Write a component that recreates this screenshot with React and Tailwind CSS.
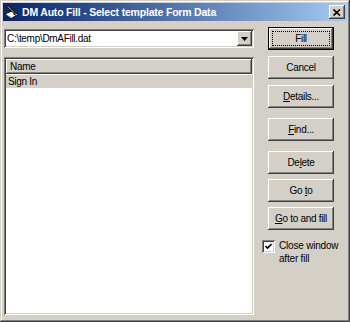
import React from 'react'

// Win2000-style dialog: "DM Auto Fill - Select template Form Data"

const raised =
  'bg-[#d4d0c8] shadow-[inset_-1px_-1px_#404040,inset_1px_1px_#ffffff,inset_-2px_-2px_#808080,inset_2px_2px_#d4d0c8]'
const sunken =
  'shadow-[inset_1px_1px_#808080,inset_-1px_-1px_#ffffff,inset_2px_2px_#404040,inset_-2px_-2px_#d4d0c8]'

const Btn = ({ children, className = '' }) => (
  <div
    className={`h-[23px] w-[66px] flex items-center justify-center text-[10px] tracking-[-0.3px] text-black ${raised} ${className}`}
  >
    {children}
  </div>
)

const TitleIcon = () => (
  <svg width="16" height="16" viewBox="0 0 16 16" className="shrink-0">
    <path d="M1 10 L8 7 L14 10.5 L7 14.5 Z" fill="#ffffff" stroke="#000" strokeWidth="0.8" />
    <path d="M2.5 11 L7 13.5" stroke="#808080" strokeWidth="0.8" />
    <path d="M3 1.5 L11 9.5" stroke="#000" strokeWidth="2.4" />
    <path d="M3.5 2 L10.5 9" stroke="#f0e060" strokeWidth="0.9" />
    <path d="M10.5 9 L12.5 12 L9.5 10.5 Z" fill="#000" />
  </svg>
)

export default function App() {
  return (
    <div
      className="w-[350px] h-[322px] flex flex-col p-[3px] bg-[#d4d0c8] shadow-[inset_-1px_-1px_#404040,inset_1px_1px_#d4d0c8,inset_-2px_-2px_#808080,inset_2px_2px_#ffffff] overflow-hidden"
      style={{ fontFamily: '"Liberation Sans", Arial, sans-serif' }}
    >
      {/* Title bar */}
      <div className="h-[18px] flex items-center pl-[1px] pr-[2px] bg-linear-to-r from-[#0a246a] to-[#a6caf0]">
        <TitleIcon />
        <span className="ml-[2px] text-[10.5px] font-bold text-white leading-none tracking-[-0.2px]">
          DM Auto Fill - Select template Form Data
        </span>
        <div className={`ml-auto w-[16px] h-[14px] flex items-center justify-center ${raised}`}>
          <svg width="8" height="7" viewBox="0 0 8 7">
            <path d="M0.5 0.5 L7 6.5 M7 0.5 L0.5 6.5" stroke="#000" strokeWidth="1.6" />
          </svg>
        </div>
      </div>

      {/* Body */}
      <div className="flex flex-1 pl-[1px] pt-[8px] pb-[4px]">
        {/* Left column */}
        <div className="w-[250px] flex flex-col">
          {/* Combo box */}
          <div className={`h-[19px] bg-white flex items-center pl-[3px] pr-[2px] ${sunken}`}>
            <span className="text-[10px] tracking-[-0.3px] text-black flex-1 leading-none">C:\temp\DmAFill.dat</span>
            <div className={`w-[15px] h-[15px] flex items-center justify-center ${raised}`}>
              <svg width="7" height="4" viewBox="0 0 7 4">
                <path d="M0 0 H7 L3.5 4 Z" fill="#000" />
              </svg>
            </div>
          </div>

          {/* List */}
          <div className={`mt-[9px] flex-1 bg-white p-[2px] flex flex-col ${sunken}`}>
            <div className={`h-[15px] flex items-center pl-[4px] text-[10px] tracking-[-0.3px] text-black ${raised}`}>
              Name
            </div>
            <div className="h-[13px] mt-[1px] flex items-center pl-[2px] bg-[#d4d0c8] text-[10px] tracking-[-0.3px] text-black">
              Sign In
            </div>
          </div>
        </div>

        {/* Right column */}
        <div className="ml-[14px] flex flex-col">
          <div className="-mt-[2px] w-[66px] h-[23px] border border-black">
            <div className={`w-full h-full flex items-center justify-center p-[3px] ${raised}`}>
              <div className="w-full h-full border border-dotted border-black flex items-center justify-center text-[10px] tracking-[-0.3px] text-black">
                Fill
              </div>
            </div>
          </div>
          <Btn className="mt-[6px]">Cancel</Btn>
          <Btn className="mt-[6px]">
            <span><span className="underline">D</span>etails...</span>
          </Btn>
          <Btn className="mt-[10px]">
            <span><span className="underline">F</span>ind...</span>
          </Btn>
          <Btn className="mt-[10px]">
            <span>De<span className="underline">l</span>ete</span>
          </Btn>
          <Btn className="mt-[5px]">
            <span>Go <span className="underline">t</span>o</span>
          </Btn>
          <Btn className="mt-[5px]">
            <span><span className="underline">G</span>o to and fill</span>
          </Btn>

          {/* Checkbox */}
          <div className="mt-[9px] flex items-start">
            <div className={`mt-[1px] ml-[-6px] w-[13px] h-[13px] bg-white flex items-center justify-center shrink-0 ${sunken}`}>
              <svg width="7" height="7" viewBox="0 0 7 7">
                <path d="M0.5 3 L2.5 5 L6.5 1" stroke="#000" strokeWidth="1.6" fill="none" />
              </svg>
            </div>
            <div className="ml-[4px] text-[10px] tracking-[-0.2px] text-black leading-[13px]">
              Close window
              <br />
              after fill
            </div>
          </div>
        </div>
      </div>
    </div>
  )
}
